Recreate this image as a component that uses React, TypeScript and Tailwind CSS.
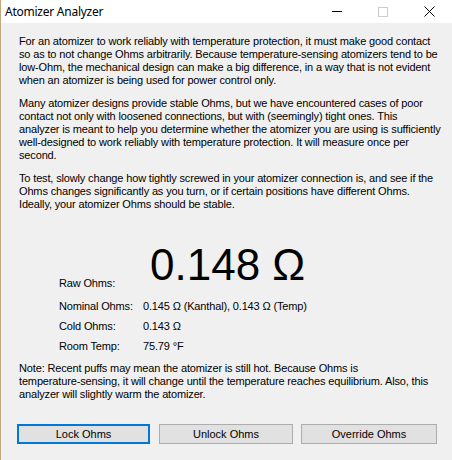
import React from 'react';

const body = { fontFamily: '"Liberation Sans", Arial, sans-serif' };

function TitleBar() {
  return (
    <div className="flex h-[23px] items-center bg-white">
      <span
        className="pl-[4px] text-[12px] tracking-[-0.25px] text-black"
        style={{ fontFamily: '"Noto Sans", sans-serif' }}
      >
        Atomizer Analyzer
      </span>
      <div className="ml-auto flex h-full items-center">
        {/* minimize */}
        <div className="flex h-full w-[46px] items-center justify-center">
          <div className="h-px w-[10px] bg-black" />
        </div>
        {/* maximize (disabled) */}
        <div className="flex h-full w-[46px] items-center justify-center">
          <div className="h-[10px] w-[10px] border border-[#cccccc]" />
        </div>
        {/* close */}
        <div className="flex h-full w-[46px] items-center justify-center">
          <svg width="11" height="11" viewBox="0 0 11 11">
            <path d="M0.5 0.5 L10.5 10.5 M10.5 0.5 L0.5 10.5" stroke="#000" strokeWidth="1" />
          </svg>
        </div>
      </div>
    </div>
  );
}

function Lines({ lines, className = '' }: { lines: string[]; className?: string }) {
  return (
    <p className={className}>
      {lines.map((l) => (
        <span key={l} className="block whitespace-nowrap">
          {l}
        </span>
      ))}
    </p>
  );
}

function Row({ label, value }: { label: string; value: string }) {
  return (
    <div className="flex h-[20px] leading-[20px]">
      <span className="w-[84px]">{label}</span>
      <span>{value}</span>
    </div>
  );
}

function Button({ children, focused, width }: { children: React.ReactNode; focused?: boolean; width: string }) {
  return (
    <button
      className={`flex h-[20px] items-center justify-center bg-[#e1e1e1] text-[11px] text-black ${width} ${
        focused ? 'border-2 border-[#0078d7]' : 'border border-[#adadad]'
      }`}
      style={body}
    >
      {children}
    </button>
  );
}

export default function App() {
  return (
    <div className="flex h-[460px] w-[452px] flex-col overflow-hidden border-l border-[#c2a67c] bg-[#f0f0f0]">
      <TitleBar />

      <div className="pl-[18px] pr-[4px] pt-[12px] text-[11px] leading-[13px] tracking-[-0.15px] text-black" style={body}>
        <Lines
          className="mb-[10px]"
          lines={[
            'For an atomizer to work reliably with temperature protection, it must make good contact',
            'so as to not change Ohms arbitrarily. Because temperature-sensing atomizers tend to be',
            'low-Ohm, the mechanical design can make a big difference, in a way that is not evident',
            'when an atomizer is being used for power control only.',
          ]}
        />
        <Lines
          className="mb-[10px]"
          lines={[
            'Many atomizer designs provide stable Ohms, but we have encountered cases of poor',
            'contact not only with loosened connections, but with (seemingly) tight ones. This',
            'analyzer is meant to help you determine whether the atomizer you are using is sufficiently',
            'well-designed to work reliably with temperature protection. It will measure once per',
            'second.',
          ]}
        />
        <Lines
          lines={[
            'To test, slowly change how tightly screwed in your atomizer connection is, and see if the',
            'Ohms changes significantly as you turn, or if certain positions have different Ohms.',
            'Ideally, your atomizer Ohms should be stable.',
          ]}
        />

        {/* readings */}
        <div className="mt-[32px] pl-[40px]">
          <div className="flex items-end">
            <span className="mb-[-3px] w-[91px]">Raw Ohms:</span>
            <span className="text-[44px] leading-[44px] tracking-normal">0.148 Ω</span>
          </div>
          <div className="mt-[9px]">
            <Row label="Nominal Ohms:" value="0.145 Ω (Kanthal), 0.143 Ω (Temp)" />
            <Row label="Cold Ohms:" value="0.143 Ω" />
            <Row label="Room Temp:" value="75.79 °F" />
          </div>
        </div>

        <Lines
          className="mt-[6px]"
          lines={[
            'Note: Recent puffs may mean the atomizer is still hot. Because Ohms is',
            'temperature-sensing, it will change until the temperature reaches equilibrium. Also, this',
            'analyzer will slightly warm the atomizer.',
          ]}
        />
      </div>

      <div className="mt-[23px] flex pl-[16px]">
        <Button focused width="w-[133px]">Lock Ohms</Button>
        <div className="w-[9px]" />
        <Button width="w-[134px]">Unlock Ohms</Button>
        <div className="w-[8px]" />
        <Button width="w-[136px]">Override Ohms</Button>
      </div>
    </div>
  );
}
